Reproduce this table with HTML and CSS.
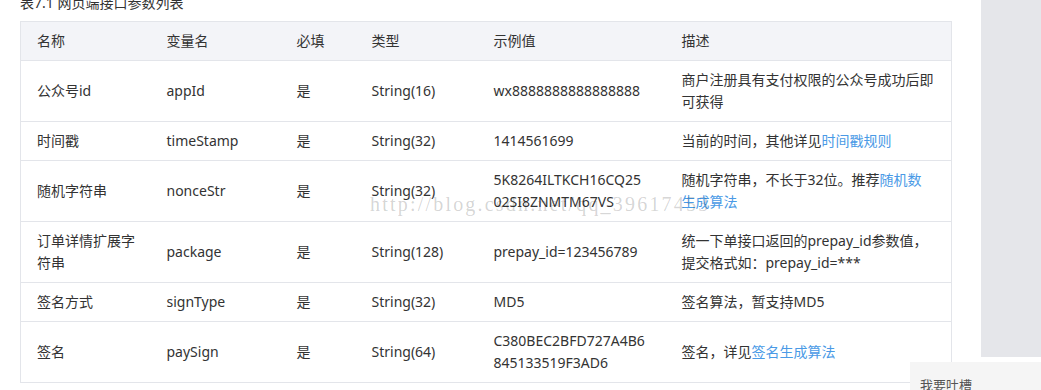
FILE: index.html
```html
<!DOCTYPE html>
<html lang="zh-CN">
<head>
<meta charset="utf-8">
<title>网页端接口参数列表</title>
<link rel="stylesheet" href="styles.css">
</head>
<body>
<div class="page">
  <main class="content">
    <p class="caption">表7.1 网页端接口参数列表</p>
    <div class="table-wrap">
      <table class="params">
        <colgroup>
          <col class="c-name"><col class="c-var"><col class="c-req"><col class="c-type"><col class="c-ex"><col class="c-desc">
        </colgroup>
        <thead>
          <tr><th>名称</th><th>变量名</th><th>必填</th><th>类型</th><th>示例值</th><th>描述</th></tr>
        </thead>
        <tbody>
          <tr><td class="nm">公众号id</td><td>appId</td><td>是</td><td>String(16)</td><td class="ex">wx8888888888888888</td><td>商户注册具有支付权限的公众号成功后即可获得</td></tr>
          <tr><td class="nm">时间戳</td><td>timeStamp</td><td>是</td><td>String(32)</td><td class="ex">1414561699</td><td>当前的时间，其他详见<a href="#">时间戳规则</a></td></tr>
          <tr><td class="nm">随机字符串</td><td>nonceStr</td><td>是</td><td>String(32)</td><td class="ex">5K8264ILTKCH16CQ2502SI8ZNMTM67VS</td><td>随机字符串，不长于32位。推荐<a href="#">随机数生成算法</a></td></tr>
          <tr><td class="nm">订单详情扩展字符串</td><td>package</td><td>是</td><td>String(128)</td><td class="ex">prepay_id=123456789</td><td>统一下单接口返回的prepay_id参数值，提交格式如：prepay_id=***</td></tr>
          <tr><td class="nm">签名方式</td><td>signType</td><td>是</td><td>String(32)</td><td class="ex">MD5</td><td>签名算法，暂支持MD5</td></tr>
          <tr><td class="nm">签名</td><td>paySign</td><td>是</td><td>String(64)</td><td class="ex">C380BEC2BFD727A4B6845133519F3AD6</td><td>签名，详见<a href="#">签名生成算法</a></td></tr>
        </tbody>
      </table>
      <div class="watermark">http://blog.csdn.net/qq_39617453</div>
    </div>
  </main>
  <aside class="sidebar"></aside>
</div>
<div class="feedback">我要吐槽</div>
</body>
</html>
```
FILE: styles.css
```css
html, body {
  margin: 0;
  padding: 0;
  background: #ffffff;
  overflow: hidden;
}
body {
  font-family: "Noto Sans", "Noto Sans CJK SC", sans-serif;
  font-size: 14px;
  color: #333333;
}
.page {
  display: flex;
  align-items: flex-start;
  width: 1041px;
  height: 390px;
}
.content {
  width: 981px;
  flex: none;
  padding-left: 20px;
  box-sizing: border-box;
}
.caption {
  margin: -8px 0 7px 0;
  line-height: 22px;
  font-size: 14px;
  color: #333;
}
.table-wrap {
  position: relative;
  width: 931px;
}
.params {
  width: 931px;
  table-layout: fixed;
  border-collapse: collapse;
  border: 1px solid #e3e5ea;
}
.c-name { width: 130px; }
.c-var { width: 130px; }
.c-req { width: 75px; }
.c-type { width: 122px; }
.c-ex { width: 188px; }
.c-desc { width: 286px; }
.params th,
.params td {
  text-align: left;
  font-weight: normal;
  padding: 8px 16px;
  line-height: 22px;
  vertical-align: middle;
  border-bottom: 1px solid #e3e5ea;
}
.params thead th {
  background: #f3f4f8;
}
.params td.nm {
  padding-right: 13px;
}
.params td.ex {
  word-break: break-all;
  padding-right: 19px;
}
.params a {
  color: #4a9ae6;
  text-decoration: none;
}
.watermark {
  position: absolute;
  left: 350px;
  top: 172px;
  font-family: "Liberation Serif", serif;
  font-size: 20px;
  letter-spacing: 2.2px;
  color: rgba(0, 0, 0, 0.18);
  pointer-events: none;
  white-space: nowrap;
}
.sidebar {
  flex: none;
  width: 60px;
  height: 357px;
  background: #e5e6ea;
}
.feedback {
  position: fixed;
  left: 910px;
  top: 362px;
  width: 131px;
  height: 40px;
  box-sizing: border-box;
  padding: 13px 0 0 10px;
  background: #f5f5f5;
  color: #555;
  font-size: 13px;
  line-height: 20px;
  font-family: "Noto Sans CJK SC", sans-serif;
}
```
